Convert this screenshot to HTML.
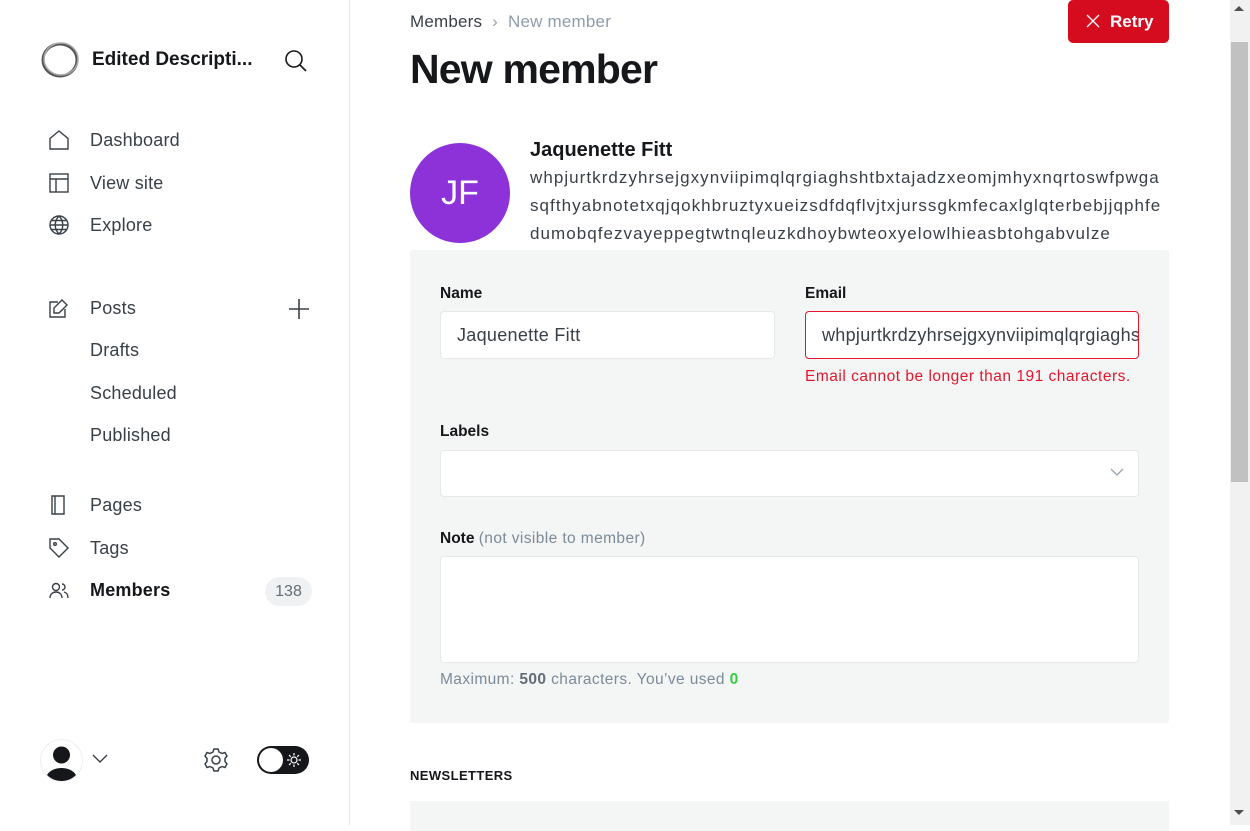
<!DOCTYPE html>
<html><head><style>
*{box-sizing:border-box;margin:0;padding:0}
body{width:1250px;height:825px;overflow:hidden;background:#fff;font-family:"Liberation Sans",sans-serif;color:#15171a;position:relative}
.side{position:absolute;left:0;top:0;width:350px;height:825px;border-right:1px solid #e6e8eb}
.nav{position:absolute;left:48px;font-size:18px;color:#394047;display:flex;align-items:center;letter-spacing:0.2px}
.nav svg{width:22px;height:22px;margin-right:20px;fill:none;stroke:#394047;stroke-width:1.4}
.t{position:absolute}
.inp{position:absolute;background:#fff;border:1px solid #e6e8eb;border-radius:4px;font-size:18px;color:#394047;padding:0 16px;display:flex;align-items:center;overflow:hidden;white-space:nowrap;letter-spacing:0.3px}
.lbl{position:absolute;font-size:15.5px;font-weight:bold;color:#15171a}
</style></head><body>
<div class="side">
 <svg class="t" style="left:40px;top:41px" width="40" height="38" viewBox="0 0 40 38"><ellipse cx="20" cy="19" rx="17" ry="16" fill="none" stroke="#555" stroke-width="3"/><ellipse cx="21" cy="18" rx="17" ry="16" fill="none" stroke="#aaa" stroke-width="1.5"/></svg>
 <div class="t" style="left:92px;top:49px;font-size:19px;font-weight:bold">Edited Descripti...</div>
 <svg class="t" style="left:284px;top:49px" width="24" height="24" viewBox="0 0 24 24" fill="none" stroke="#15171a" stroke-width="1.6"><circle cx="10" cy="10" r="8"/><path d="M16 16l6 6"/></svg>
 <div class="nav" style="top:129px"><svg viewBox="0 0 22 22"><path d="M2 9.5L11 2l9 7.5V20H2z"/></svg>Dashboard</div>
 <div class="nav" style="top:172px"><svg viewBox="0 0 22 22"><rect x="2" y="2" width="18" height="18"/><path d="M2 7h18M8 7v13"/></svg>View site</div>
 <div class="nav" style="top:214px"><svg viewBox="0 0 22 22"><circle cx="11" cy="11" r="9"/><path d="M2 11h18M11 2c-5 5-5 13 0 18M11 2c5 5 5 13 0 18M3.5 6.5h15M3.5 15.5h15"/></svg>Explore</div>
 <div class="nav" style="top:297px"><svg viewBox="0 0 22 22"><path d="M17 12v8H2V5h8M14 3l5 5-8 8H6v-5z"/></svg>Posts</div>
 <svg class="t" style="left:288px;top:298px" width="22" height="22" viewBox="0 0 22 22" stroke="#394047" stroke-width="1.6"><path d="M11 1v20M1 11h20"/></svg>
 <div class="t" style="left:90px;top:340px;font-size:18px;color:#394047;letter-spacing:0.2px">Drafts</div>
 <div class="t" style="left:90px;top:383px;font-size:18px;color:#394047;letter-spacing:0.2px">Scheduled</div>
 <div class="t" style="left:90px;top:425px;font-size:18px;color:#394047;letter-spacing:0.2px">Published</div>
 <div class="nav" style="top:494px"><svg viewBox="0 0 22 22"><path d="M4 2h12v18H4zM7 2v18"/></svg>Pages</div>
 <div class="nav" style="top:537px"><svg viewBox="0 0 22 22"><path d="M2 2h9l9 9-9 9-9-9z"/><circle cx="7" cy="7" r="1.3"/></svg>Tags</div>
 <div class="nav" style="top:579px;color:#15171a;font-weight:bold"><svg viewBox="0 0 22 22"><circle cx="8" cy="8" r="3.5"/><path d="M2 19c0-4 3-6 6-6s6 2 6 6M14 5a3 3 0 010 6M16 13c2 .5 4 2 4 6"/></svg>Members</div>
 <div class="t" style="left:265px;top:577px;width:47px;height:29px;border-radius:15px;background:#eff1f3;color:#626d79;font-size:16px;text-align:center;line-height:29px">138</div>
 <svg class="t" style="left:40px;top:739px" width="43" height="43" viewBox="0 0 43 43"><circle cx="21.5" cy="21.5" r="21" fill="#fff" stroke="#eee"/><circle cx="21.5" cy="16" r="8.5" fill="#15171a"/><path d="M7 36c3-5 9-7 14.5-7s11.5 2 14.5 7c-4 4-9 6-14.5 6S11 40 7 36z" fill="#15171a"/></svg>
 <svg class="t" style="left:92px;top:754px" width="16" height="10" viewBox="0 0 16 10" fill="none" stroke="#394047" stroke-width="1.4"><path d="M1 1l7 7 7-7"/></svg>
 <svg class="t" style="left:203px;top:747px" width="26" height="26" viewBox="0 0 26 26" fill="none" stroke="#394047" stroke-width="1.5"><path d="M11 2h4l1 3 3 1.5 3-1 2 3.5-2 2.5v3l2 2.5-2 3.5-3-1L16 21l-1 3h-4l-1-3-3-1.5-3 1-2-3.5 2-2.5v-3l-2-2.5 2-3.5 3 1L10 5z"/><circle cx="13" cy="13" r="4"/></svg>
 <div class="t" style="left:257px;top:746px;width:52px;height:28px;border-radius:14px;background:#15171a"><div style="position:absolute;left:2px;top:2px;width:24px;height:24px;border-radius:50%;background:#fff"></div>
 <svg style="position:absolute;left:29px;top:6px" width="16" height="16" viewBox="0 0 16 16" fill="none" stroke="#fff" stroke-width="1.2"><circle cx="8" cy="8" r="3"/><path d="M8 1v2.5M8 12.5V15M1 8h2.5M12.5 8H15M3 3l1.8 1.8M11.2 11.2L13 13M3 13l1.8-1.8M11.2 4.8L13 3"/></svg></div>
</div>

<div class="t" style="left:410px;top:12px;font-size:17px;color:#394047;letter-spacing:0.2px">Members <span style="color:#99a3ad;margin:0 5px">›</span> <span style="color:#8e9cac">New member</span></div>
<div class="t" style="left:410px;top:46px;font-size:41px;font-weight:bold;letter-spacing:-0.8px">New member</div>
<div class="t" style="left:1068px;top:0;width:101px;height:43px;background:#d50b20;border-radius:5px;color:#fff;font-weight:bold;font-size:17px;line-height:43px;padding-left:42px">Retry</div>
<svg class="t" style="left:1086px;top:14px" width="14" height="14" viewBox="0 0 14 14" stroke="#fff" stroke-width="1.3"><path d="M1 1l12 12M13 1L1 13"/></svg>

<div class="t" style="left:410px;top:143px;width:100px;height:100px;border-radius:50%;background:#8d32d9;color:#fff;font-size:34px;text-align:center;line-height:100px">JF</div>
<div class="t" style="left:530px;top:139px;font-size:20px;font-weight:bold">Jaquenette Fitt</div>
<div class="t" style="left:530px;top:164px;width:660px;font-size:17px;line-height:28px;color:#394047;letter-spacing:1.05px;white-space:nowrap">whpjurtkrdzyhrsejgxynviipimqlqrgiaghshtbxtajadzxeomjmhyxnqrtoswfpwga<br>sqfthyabnotetxqjqokhbruztyxueizsdfdqflvjtxjurssgkmfecaxlglqterbebjjqphfe<br>dumobqfezvayeppegtwtnqleuzkdhoybwteoxyelowlhieasbtohgabvulze</div>

<div class="t" style="left:410px;top:250px;width:759px;height:473px;background:#f4f5f5;border-radius:3px"></div>
<div class="lbl" style="left:440px;top:285px">Name</div>
<div class="inp" style="left:440px;top:311px;width:335px;height:48px">Jaquenette Fitt</div>
<div class="lbl" style="left:805px;top:285px">Email</div>
<div class="inp" style="left:805px;top:311px;width:334px;height:48px;border-color:#e4162d">whpjurtkrdzyhrsejgxynviipimqlqrgiaghs</div>
<div class="t" style="left:805px;top:368px;font-size:15.5px;color:#e4162d;letter-spacing:0.5px">Email cannot be longer than 191 characters.</div>
<div class="lbl" style="left:440px;top:423px">Labels</div>
<div class="inp" style="left:440px;top:450px;width:699px;height:47px"></div>
<svg class="t" style="left:1110px;top:468px" width="14" height="9" viewBox="0 0 14 9" fill="none" stroke="#99a3ad" stroke-width="1.3"><path d="M1 1l6 6 6-6"/></svg>
<div class="lbl" style="left:440px;top:530px">Note <span style="font-weight:normal;color:#7c8b9a;letter-spacing:0.4px">(not visible to member)</span></div>
<div class="inp" style="left:440px;top:556px;width:699px;height:107px"></div>
<div class="t" style="left:440px;top:671px;font-size:15.5px;color:#7c8b9a;letter-spacing:0.4px">Maximum: <b style="color:#626d79">500</b> characters. You’ve used <b style="color:#30cf43">0</b></div>

<div class="t" style="left:410px;top:768px;font-size:13px;font-weight:bold;letter-spacing:0.4px;color:#15171a">NEWSLETTERS</div>
<div class="t" style="left:410px;top:801px;width:759px;height:30px;background:#f4f5f5"></div>

<div class="t" style="left:1230px;top:0;width:20px;height:825px;background:#f1f1f1"></div>
<div class="t" style="left:1231px;top:42px;width:17px;height:440px;background:#c1c1c1"></div>
<div class="t" style="left:1234px;top:6px;border:5px solid transparent;border-bottom:5px solid #505050;border-top:0"></div>
<div class="t" style="left:1234px;top:810px;border:5px solid transparent;border-top:5px solid #505050;border-bottom:0"></div>
</body></html>
